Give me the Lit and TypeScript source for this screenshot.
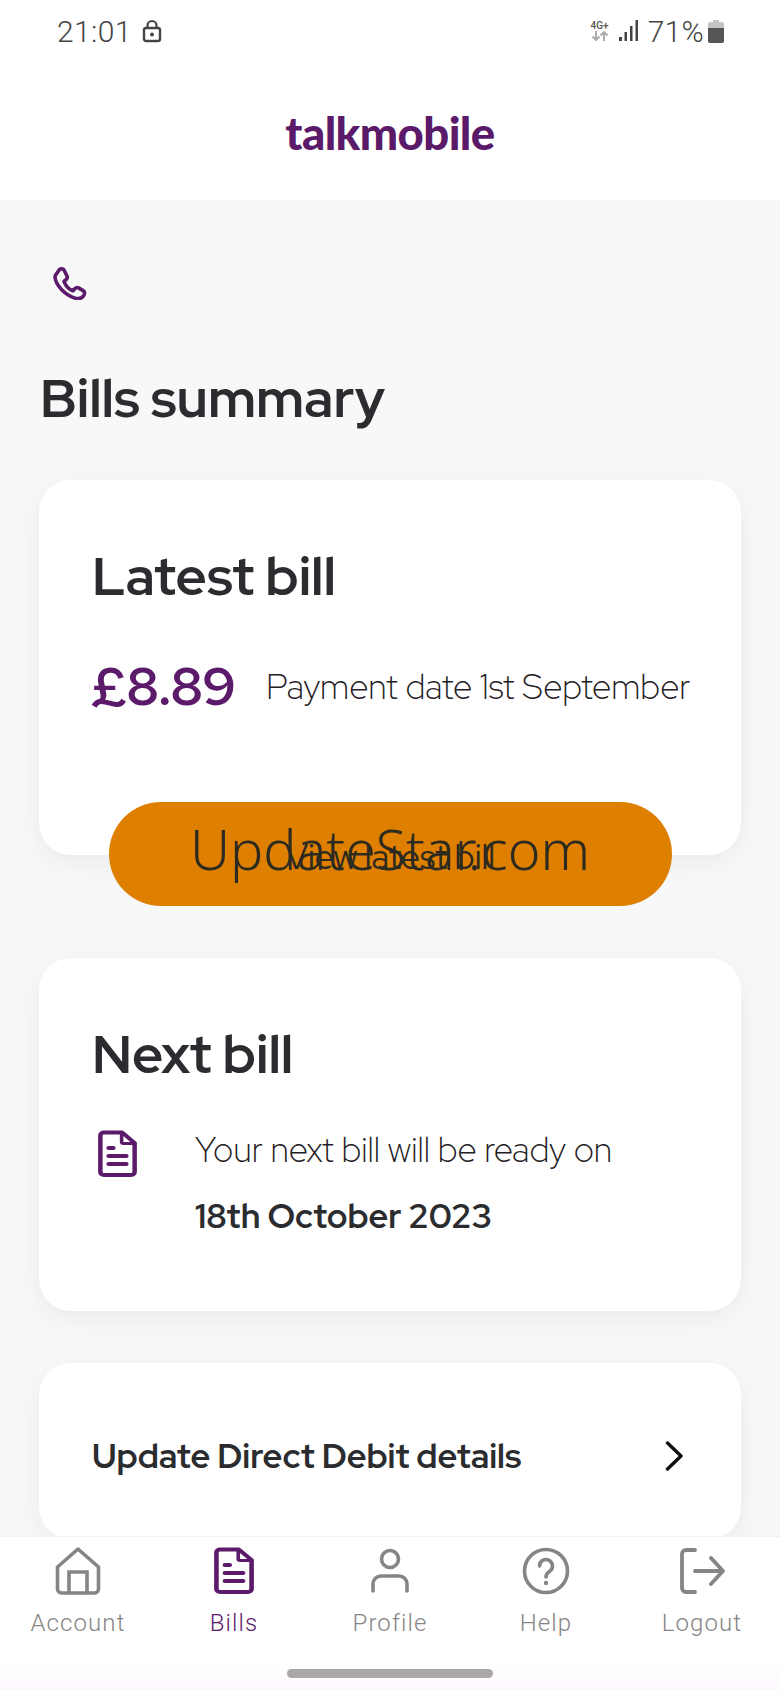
import { LitElement, html, css, svg } from "lit";
import { customElement } from "lit/decorators.js";

const docIcon = svg`<path d="M5 2.500h15.500L31 13v29a3 3 0 0 1-3 3H5a3 3 0 0 1-3-3V5.500a3 3 0 0 1 3-3Z" fill="none" stroke="currentColor" stroke-width="3.800" stroke-linejoin="round"/><path d="M20 3v9a1.500 1.500 0 0 0 1.500 1.500H31" fill="none" stroke="currentColor" stroke-width="3"/><path d="M9 18h4M9 26h15M9 34h15" fill="none" stroke="currentColor" stroke-width="3.800" stroke-linecap="round"/>`;

const navItems = [
  { label: "Account", icon: svg`<svg width="46" height="48" viewBox="0 0 46 48"><path d="M23 2 43.500 20v22a4 4 0 0 1-4 4h-33a4 4 0 0 1-4-4V20Z" fill="none" stroke="currentColor" stroke-width="3.600" stroke-linejoin="round"/><path d="M14 46V25h18v21" fill="none" stroke="currentColor" stroke-width="3.600"/></svg>` },
  { label: "Bills", active: true, icon: svg`<svg width="40" height="48" viewBox="0 0 33 48" preserveAspectRatio="none">${docIcon}</svg>` },
  { label: "Profile", icon: svg`<svg width="42" height="48" viewBox="0 0 42 48"><circle cx="21" cy="12" r="8.500" fill="none" stroke="currentColor" stroke-width="3.600"/><path d="M4 44V37a8 8 0 0 1 8-8h18a8 8 0 0 1 8 8v7" fill="none" stroke="currentColor" stroke-width="3.600" stroke-linecap="round"/></svg>` },
  { label: "Help", icon: svg`<svg width="48" height="48" viewBox="0 0 48 48"><circle cx="24" cy="24" r="21.500" fill="none" stroke="currentColor" stroke-width="3.600"/><path d="M17.500 19a6.500 6.500 0 1 1 10 5.500c-2.300 1.500-3.500 2.800-3.500 5.500" fill="none" stroke="currentColor" stroke-width="3.600" stroke-linecap="round"/><circle cx="24" cy="36" r="2.200" fill="currentColor"/></svg>` },
  { label: "Logout", icon: svg`<svg width="46" height="48" viewBox="0 0 46 48"><path d="M16 3H7a4 4 0 0 0-4 4v34a4 4 0 0 0 4 4h9M16 24h27M32 11l12 13-12 13" fill="none" stroke="currentColor" stroke-width="3.800" stroke-linecap="round" stroke-linejoin="round"/></svg>` },
];

@customElement("app-root")
export class AppRoot extends LitElement {
  static styles = css`
    :host { display: block; position: relative; width: 780px; height: 1690px; overflow: hidden; background: #f8f8f8; font-family: "Red Hat Display", Lato, "Open Sans", sans-serif; color: #2a2c2f; }
    .top { background: #fff; height: 200px; display: flex; flex-direction: column; }
    .status { height: 62px; display: flex; align-items: center; padding: 0 56px 0 57px; font-family: Roboto, sans-serif; font-weight: 300; font-size: 30px; color: #444; }
    .status .time { letter-spacing: 0.4px; margin-right: 10px; }
    .status .spacer { flex: 1; }
    .net { display: flex; flex-direction: column; align-items: center; width: 22px; margin-right: 8px; font-family: Roboto, sans-serif; font-size: 10px; font-weight: 500; line-height: 10px; color: #555; }
    .pct { margin: 0 4px 0 9px; letter-spacing: 0.3px; }
    .logo { flex: 1; display: flex; justify-content: center; align-items: center; padding-top: 4px; font-size: 45.500px; font-weight: 900; letter-spacing: -0.6px; color: #5a1a69; font-family: Lato, sans-serif; line-height: 1; }
    main { padding: 67px 39px 0; }
    .phone { display: block; margin-left: 14px; color: #5c1a6b; }
    h1 { margin: 68px 0 52px 1px; font-size: 54px; line-height: 60px; font-weight: 700; }
    .card { background: #fff; border-radius: 32px; box-shadow: 0 8px 28px rgba(0,0,0,.06); padding: 66px 53px 0; box-sizing: border-box; }
    .latest { height: 375px; }
    .next { height: 353px; }
    h2 { margin: 0; font-size: 54px; line-height: 60px; font-weight: 700; }
    .amount { display: flex; align-items: center; margin-top: 49px; height: 60px; }
    .price { font-size: 54px; font-weight: 700; color: #5c1a6b; width: 174px; flex: none; }
    .light { font-size: 34.800px; font-weight: 300; color: #1f2023; white-space: nowrap; }
    .amount .light { padding-top: 4px; }
    .cta { display: grid; place-items: center; width: 563px; height: 104px; margin: -53px auto 52px; background: #de7f00; border-radius: 52px; position: relative; color: #2d2a20; }
    .cta span { grid-area: 1 / 1; white-space: nowrap; }
    .cta .brand { font-family: "Noto Sans", sans-serif; font-size: 55.500px; font-weight: 300; margin-bottom: 12px; }
    .cta .label { font-size: 34px; font-weight: 400; margin-top: 4px; }
    .info { display: grid; grid-template-columns: 103px 1fr; margin-top: 34px; }
    .info svg { margin: 12px 0 0 6px; color: #5c1a6b; }
    .info p { margin: 0; line-height: 65px; font-size: 34px; white-space: nowrap; }
    .info p.light { font-size: 34.800px; }
    .info .date { font-weight: 700; }
    .update { margin-top: 52px; height: 176px; padding: 8px 57px 0 53px; display: flex; align-items: center; justify-content: space-between; font-size: 34.200px; font-weight: 700; }
    .update svg { margin-top: 2px; }
    .nav { position: absolute; left: 0; right: 0; bottom: 0; height: 154px; background: linear-gradient(#fff 124px, #fdf8fd); display: grid; grid-template-columns: repeat(5, 156px); border-top: 1px solid #f1f1f1; box-sizing: border-box; }
    .item { display: flex; flex-direction: column; align-items: center; padding-top: 10px; color: #858585; font-family: Roboto, sans-serif; font-size: 24px; letter-spacing: 1.100px; line-height: 32px; font-weight: 300; }
    .item svg { margin-bottom: 12px; }
    .item.active { color: #5c1a6b; }
    .home { position: absolute; left: 287px; bottom: 12px; width: 206px; height: 9px; border-radius: 5px; background: #aaa6aa; }
  `;

  render() {
    return html`
      <div class="top">
        <div class="status">
          <span class="time">21:01</span>
          <svg width="20" height="24" viewBox="0 0 20 24"><rect x="2" y="9" width="16" height="13" rx="2" fill="none" stroke="#444" stroke-width="2.400"/><path d="M5.500 9V6.500a4.500 4.500 0 0 1 9 0V9" fill="none" stroke="#444" stroke-width="2.200"/><circle cx="10" cy="15.500" r="2" fill="#444"/></svg>
          <span class="spacer"></span>
          <span class="net">4G+<svg width="20" height="10" viewBox="0 0 20 10"><path d="M6 0v9M2.500 5.500 6 9l3.500-3.500M14 10V1M10.500 4.500 14 1l3.500 3.500" fill="none" stroke="#aaa" stroke-width="2"/></svg></span>
          <svg width="20" height="22" viewBox="0 0 20 22"><g fill="#444"><rect x="0" y="17" width="3" height="4"/><rect x="5.500" y="12" width="2.500" height="9"/><rect x="11" y="6" width="2.500" height="15" /><rect x="16.500" y="0" width="2.500" height="21"/></g></svg>
          <span class="pct">71%</span>
          <svg width="16" height="23" viewBox="0 0 16 23"><path d="M5 0h6v2h3a2 2 0 0 1 2 2v4H0V4a2 2 0 0 1 2-2h3Z" fill="#c4c4c4"/><path d="M0 8h16v13a2 2 0 0 1-2 2H2a2 2 0 0 1-2-2Z" fill="#555"/></svg>
        </div>
        <div class="logo">talkmobile</div>
      </div>
      <main>
        <svg class="phone" width="34" height="33" viewBox="0 0 34 33"><path d="M3 7.500 6.500 2.500c1.500-1.200 3.500-1 4.500.5l3 6c.6 1.300.3 2.500-.8 3.500l-2.200 1.800c1.500 4 5 8 9 9.500l2-2.300c1-1 2.300-1.200 3.500-.6l5 3c1.200 1 1.300 2.800.3 4.500-2 3-5 3.800-8.500 2.800C12 28 2.500 18 2 10c0-1 .4-1.800 1-2.500Z" fill="none" stroke="currentColor" stroke-width="3.600" stroke-linejoin="round"/></svg>
        <h1>Bills summary</h1>
        <section class="card latest">
          <h2>Latest bill</h2>
          <div class="amount"><span class="price">£8.89</span><span class="light">Payment date 1st September</span></div>
        </section>
        <div class="cta"><span class="label">View latest bill</span><span class="brand">UpdateStar.com</span></div>
        <section class="card next">
          <h2>Next bill</h2>
          <div class="info">
            <svg width="39" height="48" viewBox="0 0 33 48" preserveAspectRatio="none">${docIcon}</svg>
            <div><p class="light">Your next bill will be ready on</p><p class="date">18th October 2023</p></div>
          </div>
        </section>
        <section class="card update">
          <span>Update Direct Debit details</span>
          <svg width="19" height="30" viewBox="0 0 19 30"><path d="M2.500 2 16 15 2.500 28" fill="none" stroke="#111" stroke-width="3.400" stroke-linecap="round" stroke-linejoin="round"/></svg>
        </section>
      </main>
      <nav class="nav">
        ${navItems.map((n) => html`<div class="item ${n.active ? "active" : ""}">${n.icon}<span>${n.label}</span></div>`)}
      </nav>
      <div class="home"></div>
    `;
  }
}
